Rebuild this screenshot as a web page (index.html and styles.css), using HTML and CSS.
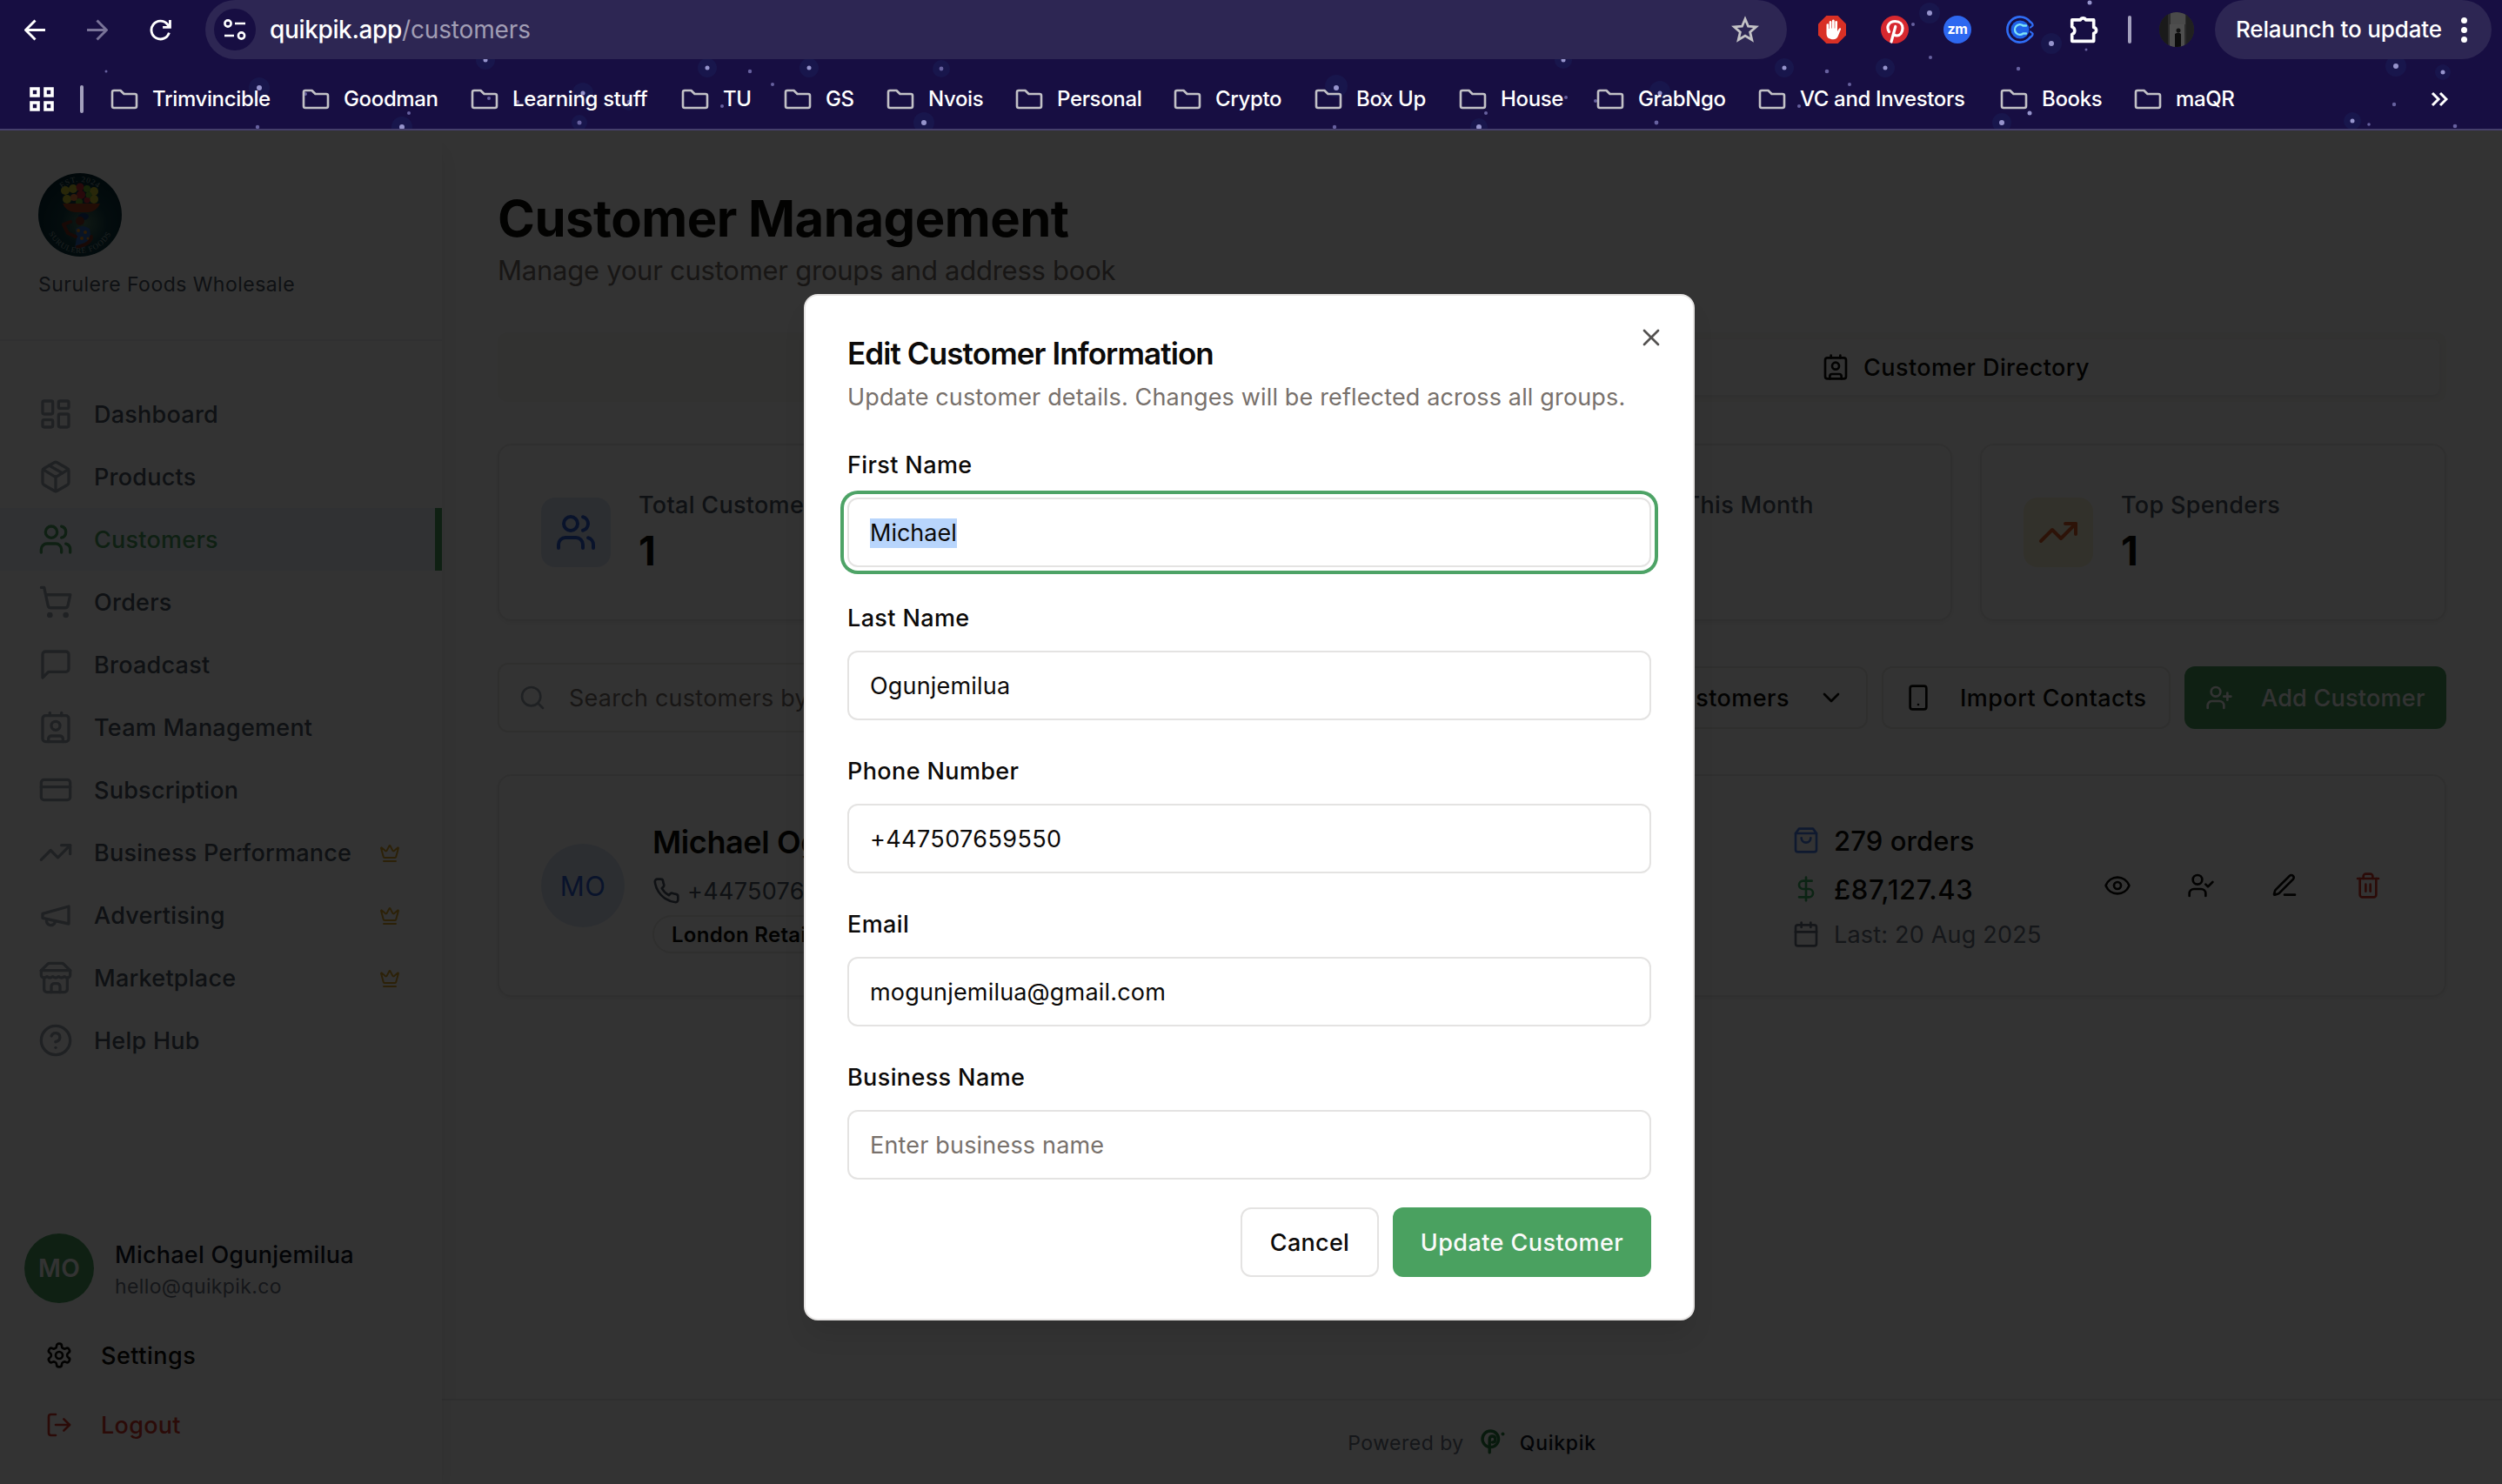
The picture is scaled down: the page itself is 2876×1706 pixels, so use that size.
FILE: index.html
```html
<!DOCTYPE html>
<html lang="en">
<head>
<meta charset="utf-8">
<title>Quikpik - Customers</title>
<link rel="stylesheet" href="styles.css">
</head>
<body>
<svg class="sprite" aria-hidden="true">
  <symbol id="dashboard" viewBox="0 0 24 24"><rect x="3" y="3" width="7" height="9" rx="1"/><rect x="14" y="3" width="7" height="5" rx="1"/><rect x="14" y="12" width="7" height="9" rx="1"/><rect x="3" y="16" width="7" height="5" rx="1"/></symbol>
  <symbol id="package" viewBox="0 0 24 24"><path d="M11 21.73a2 2 0 0 0 2 0l7-4A2 2 0 0 0 21 16V8a2 2 0 0 0-1-1.73l-7-4a2 2 0 0 0-2 0l-7 4A2 2 0 0 0 3 8v8a2 2 0 0 0 1 1.73z"/><path d="M12 22V12"/><path d="m3.3 7 7.703 4.734a2 2 0 0 0 1.994 0L20.7 7"/><path d="m7.5 4.27 9 5.15"/></symbol>
  <symbol id="users" viewBox="0 0 24 24"><path d="M16 21v-2a4 4 0 0 0-4-4H6a4 4 0 0 0-4 4v2"/><circle cx="9" cy="7" r="4"/><path d="M22 21v-2a4 4 0 0 0-3-3.87"/><path d="M16 3.13a4 4 0 0 1 0 7.75"/></symbol>
  <symbol id="cart" viewBox="0 0 24 24"><circle cx="8" cy="21" r="1"/><circle cx="19" cy="21" r="1"/><path d="M2.05 2.05h2l2.66 12.42a2 2 0 0 0 2 1.58h9.78a2 2 0 0 0 1.95-1.57l1.65-7.43H5.12"/></symbol>
  <symbol id="message" viewBox="0 0 24 24"><path d="M21 15a2 2 0 0 1-2 2H7l-4 4V5a2 2 0 0 1 2-2h14a2 2 0 0 1 2 2z"/></symbol>
  <symbol id="contact" viewBox="0 0 24 24"><path d="M16 2v2"/><path d="M7 22v-2a2 2 0 0 1 2-2h6a2 2 0 0 1 2 2v2"/><path d="M8 2v2"/><circle cx="12" cy="11" r="3"/><rect x="3" y="4" width="18" height="18" rx="2"/></symbol>
  <symbol id="card" viewBox="0 0 24 24"><rect x="2" y="5" width="20" height="14" rx="2"/><path d="M2 10h20"/></symbol>
  <symbol id="trending" viewBox="0 0 24 24"><path d="m22 7-8.5 8.5-5-5L2 17"/><path d="M16 7h6v6"/></symbol>
  <symbol id="megaphone" viewBox="0 0 24 24"><path d="m3 11 18-5v12L3 14v-3z"/><path d="M11.6 16.8a3 3 0 1 1-5.8-1.6"/></symbol>
  <symbol id="store" viewBox="0 0 24 24"><path d="m2 7 4.41-4.41A2 2 0 0 1 7.83 2h8.34a2 2 0 0 1 1.42.59L22 7"/><path d="M4 12v8a2 2 0 0 0 2 2h12a2 2 0 0 0 2-2v-8"/><path d="M15 22v-4a2 2 0 0 0-2-2h-2a2 2 0 0 0-2 2v4"/><path d="M2 7h20"/><path d="M22 7v3a2 2 0 0 1-2 2a2.7 2.7 0 0 1-1.59-.63.7.7 0 0 0-.82 0A2.7 2.7 0 0 1 16 12a2.7 2.7 0 0 1-1.59-.63.7.7 0 0 0-.82 0A2.7 2.7 0 0 1 12 12a2.7 2.7 0 0 1-1.59-.63.7.7 0 0 0-.82 0A2.7 2.7 0 0 1 8 12a2.7 2.7 0 0 1-1.59-.63.7.7 0 0 0-.82 0A2.7 2.7 0 0 1 4 12a2 2 0 0 1-2-2V7"/></symbol>
  <symbol id="help" viewBox="0 0 24 24"><circle cx="12" cy="12" r="10"/><path d="M9.09 9a3 3 0 0 1 5.83 1c0 2-3 3-3 3"/><path d="M12 17h.01"/></symbol>
  <symbol id="crown" viewBox="0 0 24 24"><path d="M11.562 3.266a.5.5 0 0 1 .876 0L15.39 8.87a1 1 0 0 0 1.516.294L21.183 5.5a.5.5 0 0 1 .798.519l-2.834 10.246a1 1 0 0 1-.956.734H5.81a1 1 0 0 1-.957-.734L2.02 6.02a.5.5 0 0 1 .798-.519l4.276 3.664a1 1 0 0 0 1.516-.294z"/><path d="M5 21h14"/></symbol>
  <symbol id="gear" viewBox="0 0 24 24"><path d="M12.22 2h-.44a2 2 0 0 0-2 2v.18a2 2 0 0 1-1 1.73l-.43.25a2 2 0 0 1-2 0l-.15-.08a2 2 0 0 0-2.73.73l-.22.38a2 2 0 0 0 .73 2.73l.15.1a2 2 0 0 1 1 1.72v.51a2 2 0 0 1-1 1.74l-.15.09a2 2 0 0 0-.73 2.73l.22.38a2 2 0 0 0 2.73.73l.15-.08a2 2 0 0 1 2 0l.43.25a2 2 0 0 1 1 1.73V20a2 2 0 0 0 2 2h.44a2 2 0 0 0 2-2v-.18a2 2 0 0 1 1-1.73l.43-.25a2 2 0 0 1 2 0l.15.08a2 2 0 0 0 2.73-.73l.22-.39a2 2 0 0 0-.73-2.73l-.15-.08a2 2 0 0 1-1-1.74v-.5a2 2 0 0 1 1-1.74l.15-.09a2 2 0 0 0 .73-2.73l-.22-.38a2 2 0 0 0-2.73-.73l-.15.08a2 2 0 0 1-2 0l-.43-.25a2 2 0 0 1-1-1.73V4a2 2 0 0 0-2-2z"/><circle cx="12" cy="12" r="3"/></symbol>
  <symbol id="logout" viewBox="0 0 24 24"><path d="M9 21H5a2 2 0 0 1-2-2V5a2 2 0 0 1 2-2h4"/><path d="m16 17 5-5-5-5"/><path d="M21 12H9"/></symbol>
  <symbol id="search" viewBox="0 0 24 24"><circle cx="11" cy="11" r="8"/><path d="m21 21-4.3-4.3"/></symbol>
  <symbol id="chevron" viewBox="0 0 24 24"><path d="m6 9 6 6 6-6"/></symbol>
  <symbol id="phone-device" viewBox="0 0 24 24"><rect x="5" y="2" width="14" height="20" rx="2"/><path d="M12 18h.01"/></symbol>
  <symbol id="user-plus" viewBox="0 0 24 24"><path d="M16 21v-2a4 4 0 0 0-4-4H6a4 4 0 0 0-4 4v2"/><circle cx="9" cy="7" r="4"/><path d="M19 8v6"/><path d="M22 11h-6"/></symbol>
  <symbol id="user-check" viewBox="0 0 24 24"><path d="M16 21v-2a4 4 0 0 0-4-4H6a4 4 0 0 0-4 4v2"/><circle cx="9" cy="7" r="4"/><path d="m16 11 2 2 4-4"/></symbol>
  <symbol id="phone" viewBox="0 0 24 24"><path d="M22 16.92v3a2 2 0 0 1-2.18 2 19.79 19.79 0 0 1-8.63-3.07 19.5 19.5 0 0 1-6-6 19.79 19.79 0 0 1-3.07-8.67A2 2 0 0 1 4.11 2h3a2 2 0 0 1 2 1.72 12.84 12.84 0 0 0 .7 2.81 2 2 0 0 1-.45 2.11L8.09 9.91a16 16 0 0 0 6 6l1.27-1.27a2 2 0 0 1 2.11-.45 12.84 12.84 0 0 0 2.81.7A2 2 0 0 1 22 16.92z"/></symbol>
  <symbol id="bag" viewBox="0 0 24 24"><path d="M6 2 3 6v14a2 2 0 0 0 2 2h14a2 2 0 0 0 2-2V6l-3-4Z"/><path d="M3 6h18"/><path d="M16 10a4 4 0 0 1-8 0"/></symbol>
  <symbol id="dollar" viewBox="0 0 24 24"><path d="M12 2v20"/><path d="M17 5H9.5a3.5 3.5 0 0 0 0 7h5a3.5 3.5 0 0 1 0 7H6"/></symbol>
  <symbol id="calendar" viewBox="0 0 24 24"><path d="M8 2v4"/><path d="M16 2v4"/><rect x="3" y="4" width="18" height="18" rx="2"/><path d="M3 10h18"/></symbol>
  <symbol id="eye" viewBox="0 0 24 24"><path d="M2.062 12.348a1 1 0 0 1 0-.696 10.75 10.75 0 0 1 19.876 0 1 1 0 0 1 0 .696 10.75 10.75 0 0 1-19.876 0"/><circle cx="12" cy="12" r="3"/></symbol>
  <symbol id="pen" viewBox="0 0 24 24"><path d="M12 20h9"/><path d="M16.376 3.622a1 1 0 0 1 3.002 3.002L7.368 18.635a2 2 0 0 1-.855.506l-2.872.838a.5.5 0 0 1-.62-.62l.838-2.872a2 2 0 0 1 .506-.854z"/></symbol>
  <symbol id="trash" viewBox="0 0 24 24"><path d="M3 6h18"/><path d="M19 6v14c0 1-1 2-2 2H7c-1 0-2-1-2-2V6"/><path d="M8 6V4c0-1 1-2 2-2h4c1 0 2 1 2 2v2"/><path d="M10 11v6"/><path d="M14 11v6"/></symbol>
  <symbol id="close" viewBox="0 0 24 24"><path d="M18 6 6 18"/><path d="m6 6 12 12"/></symbol>
  <symbol id="folder" viewBox="0 0 32 24"><path d="M2 4a2 2 0 0 1 2-2h7.500l4 4H28a2 2 0 0 1 2 2v12a2 2 0 0 1-2 2H4a2 2 0 0 1-2-2z"/></symbol>
</svg>

<header class="chrome">
  <svg class="stars" viewBox="0 0 2876 148" aria-hidden="true">
    <g class="glow"><circle cx="558" cy="69" r="11"/><circle cx="813" cy="78" r="11"/><circle cx="930" cy="78" r="11"/><circle cx="298" cy="101" r="12"/><circle cx="670" cy="107" r="12"/><circle cx="723" cy="117" r="10"/><circle cx="462" cy="146" r="12"/><circle cx="666" cy="141" r="9"/><circle cx="1082" cy="79" r="10"/><circle cx="1536" cy="99" r="13"/><circle cx="1797" cy="69" r="10"/><circle cx="1062" cy="141" r="12"/><circle cx="1700" cy="146" r="10"/><circle cx="1908" cy="105" r="12"/><circle cx="2051" cy="78" r="11"/><circle cx="2167" cy="78" r="11"/><circle cx="2218" cy="15" r="12"/><circle cx="2358" cy="50" r="12"/><circle cx="2754" cy="76" r="12"/><circle cx="2808" cy="83" r="9"/><circle cx="2704" cy="139" r="10"/><circle cx="2301" cy="141" r="11"/></g>
    <g class="dot-lg"><circle cx="558" cy="69" r="2.500"/><circle cx="813" cy="78" r="2.500"/><circle cx="930" cy="78" r="2.500"/><circle cx="298" cy="101" r="3"/><circle cx="462" cy="146" r="3"/><circle cx="670" cy="107" r="2.500"/><circle cx="1062" cy="141" r="3"/><circle cx="1536" cy="101" r="3"/><circle cx="1589" cy="108" r="2"/><circle cx="1797" cy="69" r="2.500"/><circle cx="1700" cy="146" r="3"/><circle cx="1908" cy="107" r="2.500"/><circle cx="2051" cy="78" r="2.500"/><circle cx="2167" cy="78" r="2.500"/><circle cx="2218" cy="15" r="3"/><circle cx="2358" cy="50" r="3"/><circle cx="2754" cy="76" r="3"/><circle cx="2808" cy="83" r="2.500"/><circle cx="2704" cy="139" r="2.500"/><circle cx="2301" cy="141" r="3"/><circle cx="2333" cy="130" r="2.500"/><circle cx="2402" cy="3" r="2.500"/></g>
    <g class="dot-sm"><circle cx="862" cy="82" r="2.200"/><circle cx="888" cy="97" r="2"/><circle cx="723" cy="117" r="2.200"/><circle cx="470" cy="130" r="2"/><circle cx="296" cy="146" r="2.200"/><circle cx="666" cy="141" r="2.500"/><circle cx="830" cy="122" r="2"/><circle cx="122" cy="82" r="1.500"/><circle cx="562" cy="113" r="2"/><circle cx="351" cy="108" r="2"/><circle cx="595" cy="117" r="2"/><circle cx="1082" cy="79" r="2.400"/><circle cx="1534" cy="146" r="2.200"/><circle cx="1708" cy="130" r="2"/><circle cx="1904" cy="141" r="2.400"/><circle cx="1834" cy="116" r="2"/><circle cx="1800" cy="112" r="2"/><circle cx="2100" cy="82" r="2.300"/><circle cx="2126" cy="97" r="2"/><circle cx="2199" cy="28" r="2"/><circle cx="2219" cy="66" r="2"/><circle cx="2320" cy="79" r="2.200"/><circle cx="2398" cy="57" r="1.500"/><circle cx="2752" cy="120" r="2.200"/><circle cx="2723" cy="143" r="1.800"/><circle cx="2822" cy="145" r="2.300"/><circle cx="2068" cy="122" r="2"/></g>
  </svg>
  <div class="toolbar">
    <svg class="nav-ico back" viewBox="0 0 24 24"><path d="M23 12H2M12 1.500 1.500 12 12 22.500"/></svg>
    <svg class="nav-ico forward" viewBox="0 0 24 24"><path d="M1 12h21M12 1.500 22.500 12 12 22.500"/></svg>
    <svg class="nav-ico reload" viewBox="0 0 24 24"><path d="M21.500 15A10 10 0 1 1 19.500 5.500L21.500 8"/><path d="M22.500 1v8h-8"/></svg>
    <div class="omnibox">
      <span class="tune"><svg viewBox="0 0 26 26"><circle cx="5" cy="6" r="3.600"/><path d="M13 6h12M1 20h11"/><circle cx="20.500" cy="20" r="3.600"/></svg></span>
      <span class="url"><b>quikpik.app</b>/customers</span>
      <svg class="star" viewBox="0 0 30 30"><path d="m15 3.500 3.300 7.900 8.500.7-6.500 5.600 2 8.300-7.300-4.400-7.300 4.400 2-8.300-6.500-5.600 8.500-.7z"/></svg>
    </div>
    <div class="extensions">
      <svg viewBox="0 0 32 32"><path fill="#d93025" d="M9.400 0h13.200L32 9.400v13.200L22.600 32H9.400L0 22.600V9.400z"/><path fill="#fff" d="M9.500 10.500a1.300 1.300 0 0 1 2.600 0V15h.6V7a1.400 1.400 0 0 1 2.700 0v7.500h.6V5.500a1.400 1.400 0 0 1 2.700 0v9h.6V7a1.400 1.400 0 0 1 2.700 0v11l2-3.200c.8-1.100 2.500-.5 2 .9l-3.300 8c-1 2.300-2.500 3.500-5.200 3.500-5 0-8-2-8-7z"/></svg>
      <svg viewBox="0 0 32 32"><circle cx="16" cy="16" r="16" fill="#d7282f"/><path d="M9.500 18.500C5.500 12 10 6.500 16.500 6.500c5.500 0 8.500 3.500 8.500 8 0 5-3 8.500-6.500 8.500-2 0-3.500-1-4-2.500M16.800 12.500 12 30" fill="none" stroke="#fff" stroke-width="3.200" stroke-linecap="round"/></svg>
      <svg viewBox="0 0 32 32"><circle cx="16" cy="16" r="16" fill="#2e68f0"/><text x="16" y="21" text-anchor="middle" class="zm">zm</text></svg>
      <svg viewBox="0 0 32 32"><path d="M27.500 7A14.600 14.600 0 1 0 27.500 25" fill="none" stroke="#2f6df6" stroke-width="2.600"/><path d="M27.500 7q3.500 2 3 4.500l-2.500 2M27.500 25q3.500-2 3-4.500l-2.500-2" fill="none" stroke="#2f6df6" stroke-width="2.200"/><circle cx="16" cy="16" r="10.500" fill="#1f62e8"/><path d="M23 11.500h-3.500a5.800 5.800 0 1 0 0 9H23" fill="none" stroke="#7fe3f5" stroke-width="2.400"/></svg>
      <svg class="puzzle" viewBox="0 0 32 32"><path d="M4 6.500h8.500a3.300 3.300 0 0 1 6 0H27v8a3.300 3.300 0 0 1 0 6.500v8.500H3.500v-7.500a4.200 4.200 0 0 0 0-8V6.500z"/></svg>
    </div>
    <span class="bar"></span>
    <svg class="profile" viewBox="0 0 40 40"><defs><clipPath id="pc"><circle cx="20" cy="20" r="20"/></clipPath></defs><g clip-path="url(#pc)"><rect width="40" height="40" fill="#2c2c2c"/><rect x="13" width="17" height="14" fill="#4a4a4a"/><rect x="12" y="14" width="17" height="26" fill="#666" opacity=".6"/><rect width="10" height="40" fill="#1a1a1a"/><rect x="31" width="9" height="40" fill="#202020"/><circle cx="22" cy="21" r="2.500" fill="#111"/><path d="M18 25q4-3 7 0v15h-7z" fill="#0c0c0c"/></g></svg>
    <div class="relaunch"><span>Relaunch to update</span><i class="kebab"></i></div>
  </div>
  <nav class="bookmarks">
    <svg class="apps" viewBox="0 0 28 28"><path d="M2 2h8v8H2zM18 2h8v8h-8zM2 18h8v8H2zM18 18h8v8h-8z"/></svg>
    <span class="bar"></span>
    <div class="marks">
      <span><svg><use href="#folder"/></svg>Trimvincible</span><span><svg><use href="#folder"/></svg>Goodman</span><span><svg><use href="#folder"/></svg>Learning stuff</span><span><svg><use href="#folder"/></svg>TU</span><span><svg><use href="#folder"/></svg>GS</span><span><svg><use href="#folder"/></svg>Nvois</span><span><svg><use href="#folder"/></svg>Personal</span><span><svg><use href="#folder"/></svg>Crypto</span><span><svg><use href="#folder"/></svg>Box Up</span><span><svg><use href="#folder"/></svg>House</span><span><svg><use href="#folder"/></svg>GrabNgo</span><span><svg><use href="#folder"/></svg>VC and Investors</span><span><svg><use href="#folder"/></svg>Books</span><span><svg><use href="#folder"/></svg>maQR</span>
    </div>
    <svg class="more" viewBox="0 0 20 18"><path d="m2 2 7 7-7 7M11 2l7 7-7 7"/></svg>
  </nav>
</header>

<div class="app">
  <aside class="sidebar">
    <div class="brand">
      <svg class="brand-logo" viewBox="0 0 96 96">
        <defs><radialGradient id="rg" cx=".55" cy=".6" r=".6"><stop offset="0" stop-color="#4f7b62"/><stop offset=".45" stop-color="#123f45"/><stop offset="1" stop-color="#052a35"/></radialGradient><path id="arc-top" d="M13 48a35 38 0 0 1 70 0"/><path id="arc-bot" d="M7 48a41 44 0 0 0 82 0"/></defs>
        <circle cx="48" cy="48" r="48" fill="url(#rg)"/>
        <g fill="#c9c22e"><circle cx="31" cy="20" r="5"/><circle cx="33" cy="30" r="5"/><circle cx="64" cy="21" r="5"/><circle cx="64" cy="30" r="5"/><circle cx="40" cy="18" r="5"/></g>
        <g fill="#c9303b"><circle cx="48" cy="16" r="4.500"/><circle cx="49" cy="25" r="5"/><circle cx="56" cy="31" r="3.500"/></g>
        <g fill="#6fae2d"><circle cx="56" cy="18" r="4"/><circle cx="47" cy="33" r="4"/><circle cx="58" cy="25" r="3.500"/></g>
        <circle cx="41" cy="28" r="4" fill="#e9803e"/>
        <path d="M28 35h43q-4 9-13 10H42q-10-1-14-10z" fill="#a8421e"/>
        <ellipse cx="52" cy="50" rx="6" ry="4" fill="#143f7c"/><circle cx="48" cy="55" r="5" fill="#7a3424"/>
        <path d="M43 64q8-6 16 0l2 13-9 9H42l2-11z" fill="#2d66b8"/>
        <path d="M29 59l5 10 9 4M29 59l8-3M61 73q0 8-16 12" fill="none" stroke="#7b2e20" stroke-width="4" stroke-linecap="round"/>
        <g fill="#d98a1e"><circle cx="46" cy="66" r="2"/><circle cx="54" cy="68" r="2"/><circle cx="50" cy="75" r="2"/><circle cx="57" cy="75" r="1.500"/></g>
        <text class="seal"><textPath href="#arc-top" startOffset="50%" text-anchor="middle">EST. 2024</textPath></text>
        <text class="seal"><textPath href="#arc-bot" startOffset="50%" text-anchor="middle">SURULERE FOODS</textPath></text>
      </svg>
      <p>Surulere Foods Wholesale</p>
    </div>
    <nav class="menu">
      <a><svg><use href="#dashboard"/></svg>Dashboard</a>
      <a><svg><use href="#package"/></svg>Products</a>
      <a class="active"><svg><use href="#users"/></svg>Customers</a>
      <a><svg><use href="#cart"/></svg>Orders</a>
      <a><svg><use href="#message"/></svg>Broadcast</a>
      <a><svg><use href="#contact"/></svg>Team Management</a>
      <a><svg><use href="#card"/></svg>Subscription</a>
      <a><svg><use href="#trending"/></svg>Business Performance<svg class="crown"><use href="#crown"/></svg></a>
      <a><svg><use href="#megaphone"/></svg>Advertising<svg class="crown"><use href="#crown"/></svg></a>
      <a><svg><use href="#store"/></svg>Marketplace<svg class="crown"><use href="#crown"/></svg></a>
      <a><svg><use href="#help"/></svg>Help Hub</a>
    </nav>
    <div class="account">
      <div class="user"><span class="user-avatar">MO</span><div><p class="user-name">Michael Ogunjemilua</p><p class="user-mail">hello@quikpik.co</p></div></div>
      <a class="account-link"><svg><use href="#gear"/></svg>Settings</a>
      <a class="account-link danger"><svg><use href="#logout"/></svg>Logout</a>
    </div>
  </aside>

  <div class="page">
    <main>
      <h1>Customer Management</h1>
      <p class="subtitle">Manage your customer groups and address book</p>
      <div class="tabs"><div class="tab"><svg><use href="#users"/></svg>Customer Groups</div><div class="tab on"><svg><use href="#contact"/></svg>Customer Directory</div></div>
      <div class="stats">
        <div class="stat"><span class="tile blue"><svg><use href="#users"/></svg></span><div><p>Total Customers</p><strong>1</strong></div></div>
        <div class="stat"></div>
        <div class="stat"><span class="tile"></span><div><p>New This Month</p></div></div>
        <div class="stat"><span class="tile yellow"><svg><use href="#trending"/></svg></span><div><p>Top Spenders</p><strong>1</strong></div></div>
      </div>
      <div class="filters">
        <div class="search"><svg><use href="#search"/></svg>Search customers by name</div>
        <div class="btn select">All Customers<svg><use href="#chevron"/></svg></div>
        <div class="btn import"><svg><use href="#phone-device"/></svg>Import Contacts</div>
        <div class="btn add"><svg><use href="#user-plus"/></svg>Add Customer</div>
      </div>
      <div class="customer">
        <span class="avatar">MO</span>
        <div class="who"><h3>Michael Ogunjemilua</h3><p><svg><use href="#phone"/></svg>+447507659550</p><span class="badge">London Retail</span></div>
        <div class="totals">
          <p><svg class="c-blue"><use href="#bag"/></svg>279 orders</p>
          <p class="money"><svg class="c-green"><use href="#dollar"/></svg>£87,127.43</p>
          <p class="last"><svg><use href="#calendar"/></svg>Last: 20 Aug 2025</p>
        </div>
        <div class="actions"><span><svg><use href="#eye"/></svg></span><span><svg><use href="#user-check"/></svg></span><span><svg><use href="#pen"/></svg></span><span class="danger"><svg><use href="#trash"/></svg></span></div>
      </div>
    </main>
    <footer>Powered by<svg viewBox="0 0 32 32"><circle cx="14.300" cy="12.300" r="9.300"/><path d="M13.200 27.800V13q0-4 3.300-4t3.300 3.700q0 3.300-3.300 3.300"/><circle cx="28.500" cy="6.500" r="2" class="fill"/></svg><b>Quikpik</b></footer>
  </div>

  <div class="overlay">
    <div class="dialog">
      <svg class="close"><use href="#close"/></svg>
      <h2>Edit Customer Information</h2>
      <p class="desc">Update customer details. Changes will be reflected across all groups.</p>
      <div class="form">
        <div class="field"><label>First Name</label><div class="input focus"><mark>Michael</mark></div></div>
        <div class="field"><label>Last Name</label><div class="input">Ogunjemilua</div></div>
        <div class="field"><label>Phone Number</label><div class="input tel">+447507659550</div></div>
        <div class="field"><label>Email</label><div class="input">mogunjemilua@gmail.com</div></div>
        <div class="field"><label>Business Name</label><div class="input placeholder">Enter business name</div></div>
        <div class="buttons"><div class="cancel">Cancel</div><div class="update">Update Customer</div></div>
      </div>
    </div>
  </div>
</div>
</body>
</html>
```
FILE: styles.css
```css
* { box-sizing: border-box; margin: 0; }
body { width: 2876px; height: 1706px; overflow: hidden; font-family: Inter, "Noto Sans", sans-serif; font-size: 27px; letter-spacing: .3px; line-height: 40px; color: #0c0a09; white-space: nowrap; }
svg { display: block; flex: none; width: 32px; height: 32px; fill: none; stroke: currentColor; stroke-width: 2; stroke-linecap: round; stroke-linejoin: round; }
.sprite { position: absolute; width: 0; height: 0; }

/* Browser chrome */
.chrome { position: relative; height: 150px; background: #170e42; border-bottom: 2px solid #453f6b; color: #fff; }
.stars { position: absolute; inset: 0; width: 2876px; height: 148px; stroke: none; }
.stars .glow { fill: #1f3a7a; opacity: .18; }
.stars .dot-lg { fill: #9694cc; }
.stars .dot-sm { fill: #67619f; }
.toolbar { position: relative; display: flex; align-items: center; height: 68px; padding-left: 28px; }
.nav-ico { width: 25px; height: 25px; stroke-width: 2.8; stroke-linecap: butt; stroke-linejoin: miter; }
.forward { margin-left: 46px; color: #797398; }
.reload { margin-left: 48px; }
.omnibox { display: flex; align-items: center; width: 1818px; height: 68px; margin-left: 39px; padding: 0 32px 0 10px; border-radius: 34px; background: #2d2653; }
.tune { display: flex; align-items: center; justify-content: center; width: 48px; height: 48px; border-radius: 50%; background: #170e42; }
.tune svg { width: 26px; height: 26px; stroke-width: 2.6; stroke-linecap: butt; }
.url { margin: 0 auto 0 16px; font-size: 28px; letter-spacing: -.15px; color: #a19db4; }
.url b { font-weight: 500; color: #fff; letter-spacing: -.35px; }
.star { width: 32px; height: 32px; color: #c4c3c6; stroke-width: 2.6; stroke-linejoin: miter; }
.extensions { display: flex; gap: 40px; margin-left: 36px; }
.extensions svg { stroke: none; }
.extensions .puzzle { width: 34px; height: 34px; margin: -2px -2px 0 0; stroke: #fff; stroke-width: 3.4; }
.zm { font-size: 16px; font-weight: 700; letter-spacing: -.5px; fill: #fff; }
.bar { width: 4px; height: 32px; border-radius: 2px; background: #a3a0bd; }
.toolbar .bar { margin-left: 36px; }
.profile { width: 40px; height: 40px; margin-left: 32px; stroke: none; }
.relaunch { display: flex; align-items: center; justify-content: space-between; width: 318px; height: 68px; margin-left: 24px; padding: 0 28px 0 24px; border-radius: 34px; background: #2d2653; font-size: 26px; font-weight: 500; letter-spacing: -.15px; }
.kebab { width: 7px; height: 7px; border-radius: 50%; background: #fff; box-shadow: 0 -11px #fff, 0 11px #fff; }
.bookmarks { position: relative; display: flex; align-items: center; height: 80px; margin-top: 6px; padding: 0 62px 0 34px; }
.apps { width: 28px; height: 28px; stroke-width: 3.6; stroke-linecap: butt; stroke-linejoin: miter; }
.bookmarks .bar { margin-left: 30px; }
.marks { display: grid; grid-template-columns: 220px 194px 242px 118px 118px 148px 182px 162px 166px 158px 186px 278px 154px 170px; margin-left: 31px; font-size: 24px; font-weight: 500; letter-spacing: -.35px; }
.marks span { display: flex; align-items: center; gap: 16px; }
.marks svg { width: 32px; height: 24px; stroke-width: 2.6; color: #c2c1c6; }
.more { width: 20px; height: 18px; margin-left: auto; stroke-width: 3; stroke-linecap: butt; stroke-linejoin: miter; }

/* App shell */
.app { position: relative; display: flex; height: 1556px; background: #fff; }
.menu a, .account-link, .tab, .btn, .search, .who p, .totals p, .input, .cancel, .update, footer { padding-top: 2px; }
.menu svg, .account-link svg, .tab svg, .btn svg, .search svg, .who p svg, .totals svg, footer svg { margin-top: -2px; }
.sidebar { position: relative; display: flex; flex-direction: column; width: 508px; background: #fff; box-shadow: 0 20px 30px -6px rgba(0,0,0,.1), 0 8px 12px -8px rgba(0,0,0,.1); }
.brand { height: 242px; padding: 48px 44px 0; border-bottom: 2px solid #f0f1f3; }
.brand-logo { width: 96px; height: 96px; margin-top: 1px; stroke: none; }
.seal { font-family: "Liberation Serif", serif; font-size: 9px; letter-spacing: .8px; fill: #8fa3a3; }
.brand p { margin-top: 16px; line-height: 32px; font-size: 23px; letter-spacing: .47px; color: #4b5563; }
.menu { margin-top: 48px; font-weight: 500; }
.menu a { display: flex; align-items: center; gap: 24px; height: 72px; padding-left: 44px; padding-right: 56px; letter-spacing: .25px; color: #4b5563; }
.menu svg { width: 40px; height: 40px; color: #9ca3af; }
.menu .crown { width: 24px; height: 24px; margin: 0 -8px 0 auto; color: #dca62a; }
.menu .active { border-right: 8px solid #4aa160; background: #eff6ff; color: #4aa160; }
.menu .active svg { color: #4aa160; }
.account { display: flex; flex-direction: column; margin-top: auto; padding: 0 28px 32px; font-weight: 500; }
.user { display: flex; align-items: center; gap: 24px; height: 80px; margin-bottom: 24px; }
.user-avatar { display: flex; align-items: center; justify-content: center; width: 80px; height: 80px; border-radius: 50%; background: #4aa160; color: #fff; font-size: 28px; font-weight: 600; }
.user-name { line-height: 40px; margin-top: 2px; letter-spacing: .24px; color: #111827; }
.user-mail { line-height: 32px; font-size: 23px; font-weight: 400; letter-spacing: .38px; color: #6b7280; }
.account-link { display: flex; align-items: center; gap: 32px; height: 72px; margin-bottom: 8px; padding-left: 24px; letter-spacing: .5px; }
.account-link:last-child { margin-bottom: 0; letter-spacing: .3px; }
.danger { color: #d5382c; }

.page { display: flex; flex-direction: column; width: 2368px; }
main { flex: 1; padding: 65px 64px 0; background: #fdfdfd; }
h1 { line-height: 72px; font-size: 58px; font-weight: 700; letter-spacing: -.5px; }
.subtitle { line-height: 48px; font-size: 31px; letter-spacing: -.25px; color: #78716c; }
.tabs { display: grid; grid-template-columns: 1fr 1fr; height: 80px; margin-top: 47px; padding: 8px; border-radius: 12px; background: #f8f7f6; }
.tab { display: flex; align-items: center; justify-content: center; gap: 16px; border-radius: 8px; color: #78716c; font-weight: 500; letter-spacing: .4px; }
.tab.on { background: #fff; color: #0c0a09; box-shadow: 0 2px 4px rgba(0,0,0,.05); }
.stats { display: grid; grid-template-columns: repeat(4, 1fr); gap: 32px; margin-top: 48px; }
.stat { display: flex; align-items: center; gap: 32px; height: 204px; padding: 0 48px; border: 2px solid #ecebe9; border-radius: 16px; background: #fff; box-shadow: 0 2px 4px rgba(0,0,0,.05); }
.stat > div { height: 102px; }
.stat p { font-weight: 500; color: #4b5563; }
.stat strong { display: block; line-height: 64px; font-size: 46px; }
.tile { display: flex; align-items: center; justify-content: center; width: 80px; height: 80px; border-radius: 16px; }
.tile svg { width: 48px; height: 48px; }
.blue { background: #dde6f6; color: #2f5fd8; }
.yellow { background: #f9f2d6; color: #e2612a; }
.filters { display: flex; align-items: center; gap: 16px; margin-top: 48px; }
.search { display: flex; align-items: center; gap: 26px; flex: 1; height: 80px; margin-right: 32px; padding-left: 22px; border: 2px solid #e9e8e6; border-radius: 12px; background: #fff; letter-spacing: .25px; color: #78716c; }
.search svg { color: #9ca3af; }
.btn { display: flex; align-items: center; gap: 32px; height: 72px; padding-left: 24px; padding-right: 24px; border: 2px solid #e9e8e6; border-radius: 12px; background: #fff; font-weight: 500; letter-spacing: .45px; }
.import { width: 332px; }
.add { width: 301px; border: 0; background: #4aa160; color: #fff; letter-spacing: .25px; }
.customer { display: flex; align-items: center; height: 256px; margin-top: 48px; padding: 0 48px; border: 2px solid #ecebe9; border-radius: 16px; background: #fff; box-shadow: 0 2px 4px rgba(0,0,0,.05); }
.avatar { display: flex; align-items: center; justify-content: center; width: 96px; height: 96px; padding-top: 2px; border-radius: 50%; background: #dde6f6; color: #2f5fd8; font-size: 31px; }
.who { flex: none; width: 1310px; margin-left: 32px; }
.who h3 { line-height: 56px; font-size: 36px; font-weight: 600; letter-spacing: -.4px; }
.who p { display: flex; align-items: center; gap: 8px; margin: 8px 0; height: 40px; color: #4b5563; }
.badge { display: inline-flex; align-items: center; height: 44px; padding: 1px 20px 0; border: 2px solid #e9e8e6; border-radius: 22px; vertical-align: top; font-size: 24px; font-weight: 600; }
.totals { display: flex; flex-direction: column; flex: none; gap: 8px; width: 300px; }
.totals p { display: flex; align-items: center; gap: 16px; height: 48px; font-size: 31px; font-weight: 500; letter-spacing: .1px; }
.totals .money { letter-spacing: .6px; }
.totals .last { height: 40px; font-size: 27px; font-weight: 400; letter-spacing: .2px; color: #6b7280; }
.c-blue { color: #4a7fe8; }
.c-green { color: #3fb563; }
.actions { display: flex; gap: 16px; margin-left: auto; }
.actions span { display: flex; align-items: center; justify-content: center; width: 80px; height: 72px; }
footer { display: flex; align-items: center; justify-content: center; gap: 16px; height: 98px; border-top: 2px solid #e9eaec; background: #fff; font-size: 23px; letter-spacing: .5px; color: #6b7280; }
footer svg { color: #2a8040; stroke-width: 3.4; }
footer .fill { fill: currentColor; stroke: none; }
footer b { font-weight: 500; letter-spacing: .7px; color: #111827; }

/* Edit dialog */
.overlay { position: absolute; inset: 0; display: flex; align-items: center; justify-content: center; padding-right: 4px; background: rgba(0,0,0,.8); }
.dialog { position: relative; width: 1024px; height: 1180px; padding: 48px; border: 2px solid #e7e5e4; border-radius: 16px; background: #fff; box-shadow: 0 20px 30px -6px rgba(0,0,0,.1); }
.close { position: absolute; top: 32px; right: 32px; color: #545251; }
h2 { line-height: 36px; font-size: 35px; font-weight: 600; letter-spacing: -.9px; }
.desc { margin-top: 13px; letter-spacing: .15px; color: #78716c; }
.form { display: flex; flex-direction: column; gap: 32px; margin-top: 31px; }
.field { height: 144px; }
label { display: block; height: 64px; line-height: 53px; font-weight: 500; letter-spacing: .38px; }
.input { display: flex; align-items: center; height: 80px; padding-left: 24px; padding-right: 24px; border: 2px solid #e4e3e2; border-radius: 12px; background: #fff; letter-spacing: .18px; }
.focus { box-shadow: 0 0 0 4px #fff, 0 0 0 8px #4da366; }
.tel { letter-spacing: .4px; }
mark { height: 34px; line-height: 34px; background: #b8d5fc; color: inherit; letter-spacing: 0; }
.placeholder { color: #78716c; }
.buttons { display: flex; justify-content: flex-end; gap: 16px; font-weight: 500; }
.cancel, .update { display: flex; align-items: center; justify-content: center; height: 80px; border-radius: 12px; letter-spacing: .45px; }
.cancel { width: 159px; border: 2px solid #e4e3e2; letter-spacing: .3px; }
.update { width: 297px; background: #4aa160; color: #fafaf9; }
```
